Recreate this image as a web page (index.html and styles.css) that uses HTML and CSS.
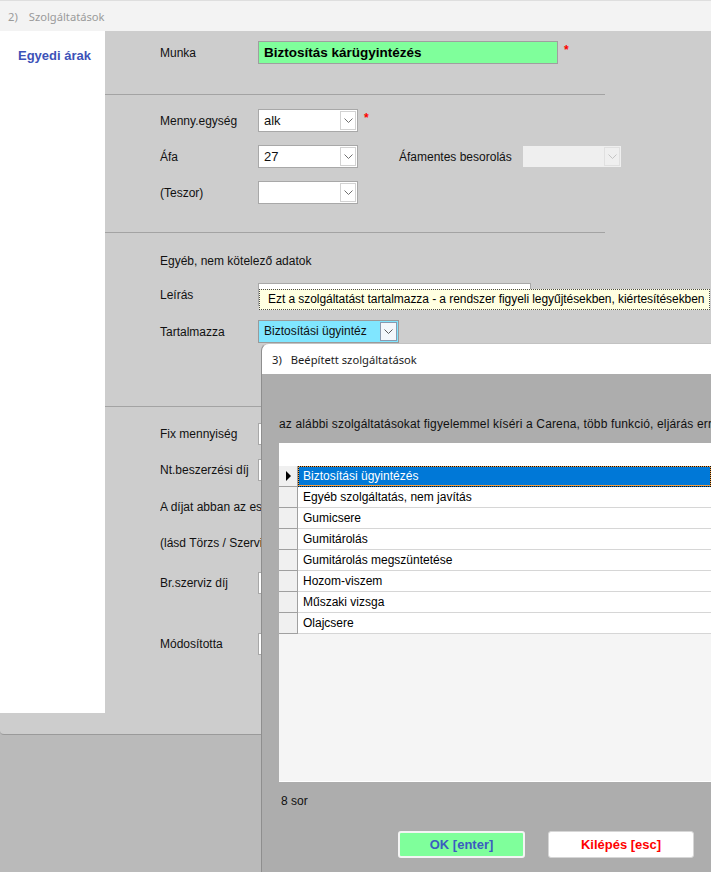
FILE: index.html
```html
<!DOCTYPE html>
<html lang="hu">
<head>
<meta charset="utf-8">
<title>Szolgáltatások</title>
<link rel="stylesheet" href="styles.css">
</head>
<body>
<div class="win">
  <div class="win-title"><span>2)</span><span>Szolgáltatások</span></div>
  <div class="win-body">
    <aside class="side"><span class="side-link">Egyedi árak</span></aside>
    <main class="form">
      <section class="sec sec1">
        <div class="row">
          <span class="lbl">Munka</span>
          <div class="field munka">Biztosítás kárügyintézés</div>
          <span class="req">*</span>
        </div>
      </section>
      <div class="sep"></div>
      <section class="sec sec2">
        <div class="row">
          <span class="lbl">Menny.egység</span>
          <div class="combo"><span class="val big">alk</span><span class="dd"><svg width="9" height="5" viewBox="0 0 9 5"><path d="M0.5 0.5 L4.5 4.5 L8.5 0.5" fill="none" stroke="#707070"/></svg></span></div>
          <span class="req">*</span>
        </div>
        <div class="row">
          <span class="lbl">Áfa</span>
          <div class="combo"><span class="val big">27</span><span class="dd"><svg width="9" height="5" viewBox="0 0 9 5"><path d="M0.5 0.5 L4.5 4.5 L8.5 0.5" fill="none" stroke="#707070"/></svg></span></div>
          <span class="lbl lbl2">Áfamentes besorolás</span>
          <div class="combo disabled"><span class="val"></span><span class="dd"><svg width="9" height="5" viewBox="0 0 9 5"><path d="M0.5 0.5 L4.5 4.5 L8.5 0.5" fill="none" stroke="#c4c4c4"/></svg></span></div>
        </div>
        <div class="row">
          <span class="lbl">(Teszor)</span>
          <div class="combo"><span class="val"></span><span class="dd"><svg width="9" height="5" viewBox="0 0 9 5"><path d="M0.5 0.5 L4.5 4.5 L8.5 0.5" fill="none" stroke="#707070"/></svg></span></div>
        </div>
      </section>
      <div class="sep"></div>
      <section class="sec sec3">
        <div class="note">Egyéb, nem kötelező adatok</div>
        <div class="row r-leiras">
          <span class="lbl">Leírás</span>
          <div class="field leiras"></div>
        </div>
        <div class="row r-tart">
          <span class="lbl">Tartalmazza</span>
          <div class="combo cyan"><span class="val">Biztosítási ügyintéz</span><span class="dd"><svg width="9" height="5" viewBox="0 0 9 5"><path d="M0.5 0.5 L4.5 4.5 L8.5 0.5" fill="none" stroke="#5a5a5a"/></svg></span></div>
        </div>
      </section>
      <div class="sep"></div>
      <section class="sec sec4">
        <div class="row r-fix"><span class="lbl">Fix mennyiség</span><div class="field num"></div></div>
        <div class="row r-nt"><span class="lbl">Nt.beszerzési díj</span><div class="field num"></div></div>
        <div class="note clip r-dijat">A díjat abban az esetben kell megadni</div>
        <div class="note clip r-lasd">(lásd Törzs / Szerviz díjak)</div>
        <div class="row r-br"><span class="lbl">Br.szerviz díj</span><div class="field num"></div></div>
        <div class="row r-mod"><span class="lbl">Módosította</span><div class="field num"></div></div>
      </section>
    </main>
  </div>
</div>

<div class="tooltip">Ezt a szolgáltatást tartalmazza - a rendszer figyeli legyűjtésekben, kiértesítésekben</div>

<div class="dialog">
  <div class="dlg-title"><span>3)</span><span>Beépített szolgáltatások</span></div>
  <div class="dlg-body">
    <p class="msg">az alábbi szolgáltatásokat figyelemmel kíséri a Carena, több funkció, eljárás erre</p>
    <div class="grid">
      <div class="grid-head"></div>
      <div class="grow sel"><span class="rh"><span class="arrow"></span></span><span class="cell">Biztosítási ügyintézés</span></div>
      <div class="grow"><span class="rh"></span><span class="cell">Egyéb szolgáltatás, nem javítás</span></div>
      <div class="grow"><span class="rh"></span><span class="cell">Gumicsere</span></div>
      <div class="grow"><span class="rh"></span><span class="cell">Gumitárolás</span></div>
      <div class="grow"><span class="rh"></span><span class="cell">Gumitárolás megszüntetése</span></div>
      <div class="grow"><span class="rh"></span><span class="cell">Hozom-viszem</span></div>
      <div class="grow"><span class="rh"></span><span class="cell">Műszaki vizsga</span></div>
      <div class="grow"><span class="rh"></span><span class="cell">Olajcsere</span></div>
    </div>
    <div class="count">8 sor</div>
    <div class="buttons">
      <button class="btn ok">OK [enter]</button>
      <button class="btn esc">Kilépés [esc]</button>
    </div>
  </div>
</div>
</body>
</html>
```

FILE: styles.css
```css
* {
  box-sizing: border-box;
  margin: 0;
  padding: 0;
}

html,
body {
  width: 711px;
  height: 872px;
  overflow: hidden;
}

body {
  position: relative;
  background: #bababa;
  font-family: "Liberation Sans", Arial, sans-serif;
  font-size: 12px;
  color: #111;
}

/* ---------- window 2 ---------- */
.win {
  height: 735px;
  background: #cdcdcd;
  border-bottom: 1px solid #9a9a9a;
  border-bottom-left-radius: 4px;
  display: flex;
  flex-direction: column;
}

.win-title {
  height: 31px;
  flex: none;
  background: #f3f3f3;
  border-top: 1px solid #dedede;
  display: flex;
  align-items: center;
  gap: 11px;
  padding-left: 8px;
  font-family: "Noto Sans", "Open Sans", sans-serif;
  font-size: 11.2px;
  color: #9a9a9a;
}

.win-body {
  flex: 1;
  display: flex;
  align-items: flex-start;
}

.side {
  width: 105px;
  height: 682px;
  flex: none;
  background: #fff;
  padding: 17px 0 0 18px;
}

.side-link {
  font-weight: bold;
  font-size: 13px;
  line-height: 15px;
  color: #3d52b8;
}

.form {
  flex: 1;
  display: flex;
  flex-direction: column;
}

.sec {
  display: flex;
  flex-direction: column;
  padding-left: 55px;
}

.sep {
  width: 500px;
  height: 1px;
  background: #a3a3a3;
}

.sec1 {
  padding-top: 10px;
  padding-bottom: 30px;
}

.sec2 {
  padding-top: 14px;
  padding-bottom: 28px;
  gap: 13px;
}

.sec3 {
  padding-top: 21px;
  padding-bottom: 63px;
}

.sec4 {
  padding-top: 15px;
}

.row {
  display: flex;
  align-items: center;
  height: 23px;
}

.lbl {
  width: 98px;
  flex: none;
  color: #111;
  padding-top: 1px;
}

.lbl2 {
  width: 123px;
  margin-left: 41px;
}

.note {
  line-height: 14px;
  height: 14px;
  white-space: nowrap;
}

.note.clip {
  width: 101px;
  overflow: hidden;
}

.req {
  color: #ff0000;
  font-weight: bold;
  font-size: 12px;
  align-self: flex-start;
  margin-left: 6px;
  margin-top: 2px;
}

.field {
  height: 23px;
  background: #fff;
  border: 1px solid #a8a8a8;
}

.munka {
  width: 300px;
  background: #7fff9b;
  border-color: #9f9f9f;
  font-weight: bold;
  font-size: 13.5px;
  line-height: 21px;
  padding-left: 5px;
  color: #000;
}

.leiras {
  width: 273px;
}

.num {
  width: 110px;
  height: 22px;
}

.combo {
  width: 100px;
  height: 23px;
  background: #fff;
  border: 1px solid #a8a8a8;
  display: flex;
  align-items: center;
  padding: 1px;
}

.combo .val {
  flex: 1;
  padding-left: 4px;
  line-height: 19px;
  white-space: nowrap;
  overflow: hidden;
}

.combo .big {
  font-size: 13px;
}

.dd {
  width: 16px;
  height: 19px;
  flex: none;
  border: 1px solid #d2d2d2;
  background: #fff;
  display: flex;
  align-items: center;
  justify-content: center;
}

.combo.disabled {
  background: #efefef;
  border-color: #cdcdcd;
}

.combo.disabled .dd {
  background: #efefef;
  border-color: #e0e0e0;
}

.combo.cyan {
  width: 141px;
  background: #80e6ff;
  border-color: #9a9a9a;
}

.combo.cyan .dd {
  width: 17px;
  border-color: #8a9ab0;
  background: #f4f8fc;
}

.r-leiras {
  margin-top: 15px;
}

.r-tart {
  margin-top: 14px;
}

.r-nt {
  margin-top: 13px;
}

.r-dijat {
  margin-top: 19px;
}

.r-lasd {
  margin-top: 22px;
}

.r-br {
  margin-top: 21px;
}

.r-mod {
  margin-top: 38px;
}

/* ---------- tooltip ---------- */
.tooltip {
  position: absolute;
  left: 259px;
  top: 289px;
  width: 451px;
  height: 21px;
  background: #ffffe1;
  border: 1px dotted #4a4a4a;
  padding-left: 8px;
  line-height: 19px;
  white-space: nowrap;
  letter-spacing: -0.06px;
  color: #000;
}

/* ---------- dialog 3 ---------- */
.dialog {
  position: absolute;
  left: 261px;
  top: 343px;
  width: 450px;
  height: 529px;
  border-left: 1px solid #8e8e8e;
  border-top: 1px solid #c2c2c2;
  border-top-left-radius: 8px;
  overflow: hidden;
  display: flex;
  flex-direction: column;
}

.dlg-title {
  height: 30px;
  flex: none;
  background: #fff;
  display: flex;
  align-items: center;
  gap: 9px;
  padding-left: 10px;
  font-family: "Noto Sans", "Open Sans", sans-serif;
  font-size: 11.2px;
  color: #1b1b1b;
}

.dlg-body {
  flex: 1;
  background: #adadad;
  padding: 43px 0 0 17px;
  display: flex;
  flex-direction: column;
}

.msg {
  line-height: 14px;
  white-space: nowrap;
  letter-spacing: 0.15px;
  color: #111;
}

.grid {
  margin-top: 12px;
  height: 339px;
  width: 432px;
  background: #f5f5f5;
  border-bottom: 1px solid #fff;
  display: flex;
  flex-direction: column;
}

.grid-head {
  height: 23px;
  background: #fff;
}

.grow {
  display: flex;
  height: 21px;
}

.rh {
  width: 19px;
  flex: none;
  background: #f0f0f0;
  border-right: 1px solid #a0a0a0;
  border-bottom: 1px solid #a0a0a0;
  display: flex;
  align-items: center;
  justify-content: center;
}

.arrow {
  width: 0;
  height: 0;
  border-left: 5px solid #000;
  border-top: 5px solid transparent;
  border-bottom: 5px solid transparent;
  margin-left: 1px;
}

.cell {
  flex: 1;
  background: #fff;
  border-bottom: 1px solid #d6d6d6;
  padding-left: 5px;
  line-height: 20px;
  white-space: nowrap;
  color: #000;
}

.sel .cell {
  background: #0078d7;
  color: #fff;
  box-shadow: inset 0 0 0 1px #f5a040;
  outline: 1px dotted #111;
  outline-offset: -1px;
  border-bottom-color: #0078d7;
}

.count {
  margin-top: 12px;
  padding-left: 2px;
  line-height: 14px;
  color: #111;
}

.buttons {
  margin-top: 23px;
  padding-left: 119px;
  display: flex;
  gap: 23px;
}

.btn {
  height: 27px;
  flex: none;
  font-family: "Liberation Sans", Arial, sans-serif;
  font-weight: bold;
  font-size: 13px;
  border-radius: 3px;
  cursor: pointer;
}

.ok {
  width: 127px;
  background: #7fff9b;
  border: 2px solid #f4f4f4;
  color: #3b5cc0;
}

.esc {
  width: 146px;
  background: #fff;
  border: 1px solid #d6d6d6;
  color: #ff0000;
}
```
